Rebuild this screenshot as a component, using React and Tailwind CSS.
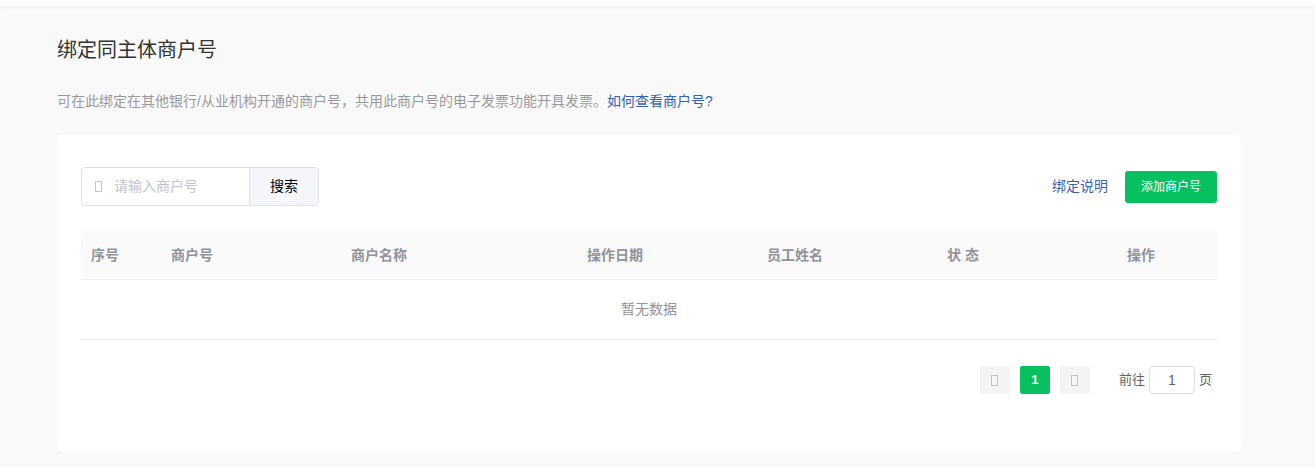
import React from 'react';

const columns = [
    { label: '序号', width: 'w-[80px]' },
    { label: '商户号', width: 'w-[180px]' },
    { label: '商户名称', width: 'w-[236px]' },
    { label: '操作日期', width: 'w-[180px]' },
    { label: '员工姓名', width: 'w-[180px]' },
    { label: '状 态', width: 'w-[180px]' },
    { label: '操作', width: 'flex-1' },
];

// icon font glyph that failed to load: shows as an empty box
function Tofu({ className = '' }) {
    return <span className={`inline-block w-[7px] h-[11px] border border-current ${className}`} />;
}

export default function App() {
    return (
        <div className="min-h-[467px] bg-[#f9f9f9] font-['Liberation_Sans','Noto_Sans_CJK_SC',sans-serif]">
            <div className="h-[6px] bg-white shadow-[0_1px_4px_rgba(0,0,0,0.05)]" />

            <div className="pl-[57px] pr-[74px]">
                <h1 className="pt-[31px] text-[20px] leading-[26px] text-[#333]">绑定同主体商户号</h1>

                <p className="mt-[28px] text-[14px] leading-[20px] text-[#999]">
                    可在此绑定在其他银行/从业机构开通的商户号，共用此商户号的电子发票功能开具发票。
                    <a className="text-[#3660b0] cursor-pointer">如何查看商户号?</a>
                </p>

                {/* 卡片 */}
                <div className="mt-[24px] bg-white rounded-[6px] px-[24px] pt-[32px] pb-[58px]">
                    {/* 工具栏 */}
                    <div className="flex items-center justify-between">
                        <div className="flex h-[39px] border border-[#dcdfe6] rounded-[4px] overflow-hidden">
                            <div className="w-[167px] flex items-center pl-[13px] text-[14px] text-[#c0c4cc]">
                                <Tofu className="mr-[12px]" />
                                <span>请输入商户号</span>
                            </div>
                            <button className="w-[69px] border-l border-[#dcdfe6] bg-[#f5f6fa] text-[14px] text-black">
                                搜索
                            </button>
                        </div>
                        <div className="flex items-center">
                            <a className="text-[14px] text-[#3d5fb0] cursor-pointer">绑定说明</a>
                            <button className="ml-[17px] h-[32px] w-[92px] rounded-[3px] bg-[#07c160] text-white text-[12px]">
                                添加商户号
                            </button>
                        </div>
                    </div>

                    {/* 表格 */}
                    <div className="mt-[25px]">
                        <div className="flex h-[49px] items-center bg-[#fafafa] border-b border-[#ebeef5] text-[14px] font-bold text-[#909399]">
                            {columns.map((col) => (
                                <div key={col.label} className={`${col.width} pl-[10px]`}>
                                    {col.label}
                                </div>
                            ))}
                        </div>
                        <div className="h-[60px] flex items-center justify-center border-b border-[#ebeef5] text-[14px] text-[#909399]">
                            暂无数据
                        </div>
                    </div>

                    {/* 分页 */}
                    <div className="mt-[26px] flex items-center justify-end pr-[5px] text-[13px] text-[#606266]">
                        <button className="w-[30px] h-[28px] rounded-[2px] bg-[#f4f4f5] flex items-center justify-center text-[#c0c4cc]">
                            <Tofu />
                        </button>
                        <button className="ml-[10px] w-[30px] h-[28px] rounded-[2px] bg-[#07c160] text-white font-bold">
                            1
                        </button>
                        <button className="ml-[10px] w-[30px] h-[28px] rounded-[2px] bg-[#f4f4f5] flex items-center justify-center text-[#c0c4cc]">
                            <Tofu />
                        </button>
                        <span className="ml-[29px]">前往</span>
                        <div className="ml-[4px] w-[46px] h-[28px] border border-[#dcdfe6] rounded-[4px] flex items-center justify-center text-[14px]">
                            1
                        </div>
                        <span className="ml-[4px]">页</span>
                    </div>
                </div>
            </div>
        </div>
    );
}
